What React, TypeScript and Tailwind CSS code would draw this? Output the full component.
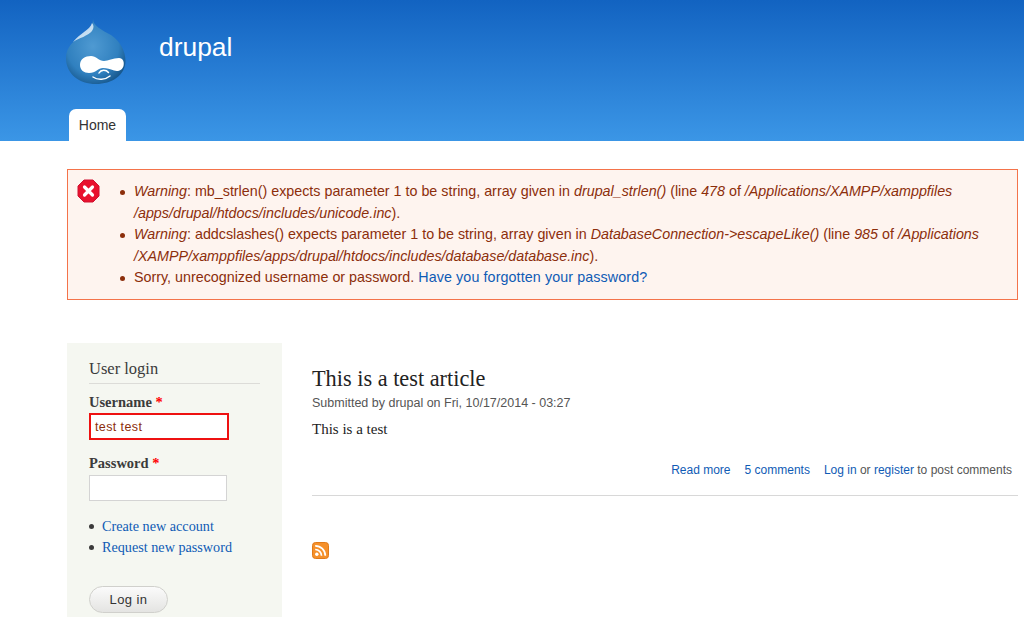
const sans = { fontFamily: '"Liberation Sans", Arial, sans-serif' };

function DrupalLogo() {
  return (
    <svg width="60" height="67" viewBox="6 6 60 67" className="block">
      <defs>
        <radialGradient id="drop" cx="0.45" cy="0.42" r="0.62">
          <stop offset="0" stopColor="#4f9ad2" />
          <stop offset="0.7" stopColor="#3080bf" />
          <stop offset="1" stopColor="#18598f" />
        </radialGradient>
      </defs>
      <path
        d="M33 7C33 14 42 18 51 23C60 29 65.500 39 65.500 49C65.500 63 52 72 36 72C19 72 6 62 6 46C6 35 14 28 23 23C28 20 33 15 33 7Z"
        fill="url(#drop)"
      />
      <path d="M32 11C30 18 20 21 13 30C19 26 28 24 32 19C34 16 34 13 32 11Z" fill="#d5e8f6" opacity="0.9" />
      <path
        d="M20 53C20 47 25 44 31 44C36 44 39 49 44 49C48 49 53 46 59 46C63 46 64.500 50 63.500 54C62.500 58 58 60 54 58.500C50 57 47 56 43 56C38 56 36 61 29 61C24 61 20 58 20 53Z"
        fill="#fff"
      />
      <path d="M39 61C41 57.500 46 57.500 48.500 60.500" stroke="#fff" strokeWidth="1.500" fill="none" strokeLinecap="round" />
      <path d="M33 65C38 68.500 45 68 50 64" stroke="#fff" strokeWidth="1.500" fill="none" strokeLinecap="round" />
    </svg>
  );
}

function ErrorIcon() {
  return (
    <svg width="23" height="24" viewBox="0 0 23 24" className="block">
      <path d="M7 1H16L22 7V17L16 23H7L1 17V7Z" fill="#e8112d" stroke="#d01030" strokeWidth="1" strokeLinejoin="round" />
      <path d="M7.500 8L15.500 16M15.500 8L7.500 16" stroke="#fff" strokeWidth="3.200" strokeLinecap="round" />
    </svg>
  );
}

function RssIcon() {
  return (
    <svg width="17" height="17" viewBox="0 0 17 17" className="block">
      <rect x="0.500" y="0.500" width="16" height="16" rx="3" fill="#f5902a" stroke="#e07a18" />
      <circle cx="4.800" cy="12.300" r="1.700" fill="#fff" />
      <path d="M3.200 7.500A6.200 6.200 0 0 1 9.500 13.800" stroke="#fff" strokeWidth="1.700" fill="none" />
      <path d="M3.200 3.800A10 10 0 0 1 13.300 13.800" stroke="#fff" strokeWidth="1.700" fill="none" />
    </svg>
  );
}

function Bullet({ children }: { children: React.ReactNode }) {
  return (
    <li className="flex">
      <span className="w-[14px] shrink-0 flex pt-[9px]">
        <span className="w-[5px] h-[5px] rounded-full bg-[#8c2e0b]" />
      </span>
      <span>{children}</span>
    </li>
  );
}

export default function App() {
  return (
    <div className="h-[617px] w-[1024px] overflow-hidden bg-white font-['Liberation_Serif',serif]">
      {/* Header */}
      <header className="h-[141px] bg-gradient-to-b from-[#1263c1] to-[#3b96e6] pl-[66px] flex flex-col" style={sans}>
        <div className="flex pt-[18px] h-[109px]">
          <DrupalLogo />
          <span className="ml-[33px] mt-[13px] text-[26.400px] leading-[32px] text-white">drupal</span>
        </div>
        <nav className="ml-[3px] w-[57px] h-[32px] bg-white rounded-t-[7px] flex items-center justify-center text-[14px] text-[#333]">
          Home
        </nav>
      </header>

      {/* Error messages */}
      <div className="ml-[67px] mt-[28px] w-[951px] h-[131px] border border-[#f4734a] bg-[#fef4ef] flex pl-[9px] pt-[9px] text-[#8c2e0b] text-[14.300px] leading-[21.500px]" style={sans}>
        <ErrorIcon />
        <ul className="ml-[20px] mt-[2px]">
          <Bullet>
            <em>Warning</em>: mb_strlen() expects parameter 1 to be string, array given in <em>drupal_strlen()</em> (line <em>478</em> of <em>/Applications/XAMPP/xamppfiles</em>
            <br />
            <em>/apps/drupal/htdocs/includes/unicode.inc</em>).
          </Bullet>
          <Bullet>
            <em>Warning</em>: addcslashes() expects parameter 1 to be string, array given in <em>DatabaseConnection-&gt;escapeLike()</em> (line <em>985</em> of <em>/Applications</em>
            <br />
            <em>/XAMPP/xamppfiles/apps/drupal/htdocs/includes/database/database.inc</em>).
          </Bullet>
          <Bullet>
            Sorry, unrecognized username or password. <a className="text-[#0f5bb5] tracking-[0.1px]">Have you forgotten your password?</a>
          </Bullet>
        </ul>
      </div>

      <div className="flex ml-[67px] mt-[43px]">
        {/* Sidebar */}
        <aside className="w-[215px] h-[274px] bg-[#f5f7f1] pl-[22px] pt-[16px] text-[#3b3b3b]">
          <h2 className="w-[171px] h-[25px] border-b border-[#dcdcd8] text-[16.500px] leading-[20px]">User login</h2>
          <label className="block mt-[10px] font-bold text-[14.500px] leading-[17px]">
            Username <span className="text-[#f00]">*</span>
          </label>
          <div className="mt-[2px] w-[140px] h-[27px] border-2 border-[#ee1111] bg-white pl-[4px] text-[12.500px] leading-[24px] text-[#8c2e0b] tracking-[0.4px]" style={sans}>
            test test
          </div>
          <label className="block mt-[15px] font-bold text-[14.500px] leading-[17px]">
            Password <span className="text-[#f00]">*</span>
          </label>
          <div className="mt-[3px] w-[138px] h-[26px] border border-[#d4d4d4] bg-white" />
          <ul className="mt-[15px] text-[14.200px] leading-[21px]">
            {["Create new account", "Request new password"].map((t) => (
              <li key={t} className="flex items-center">
                <span className="w-[5px] h-[5px] rounded-full bg-[#3b3b3b] mr-[8px]" />
                <a className="text-[#0f5bb5]">{t}</a>
              </li>
            ))}
          </ul>
          <button className="block mt-[28px] w-[79px] h-[27px] rounded-full border border-[#d0d0cc] bg-gradient-to-b from-[#fbfbfb] to-[#e4e4e2] text-[13px] text-[#333] tracking-[0.4px]" style={sans}>
            Log in
          </button>
        </aside>

        {/* Article */}
        <main className="ml-[30px] w-[706px] text-[#222]">
          <h1 className="mt-[22px] text-[22.300px] leading-[28px]">This is a test article</h1>
          <p className="mt-[2px] text-[12.500px] leading-[16px] text-[#555]" style={sans}>
            Submitted by drupal on Fri, 10/17/2014 - 03:27
          </p>
          <p className="mt-[9px] text-[15px] leading-[18px]">This is a test</p>
          <div className="mt-[24px] h-[34px] pr-[6px] flex justify-end gap-[14px] text-[12px] leading-[16px] text-[#555] border-b border-[#d8d8d8]" style={sans}>
            <a className="text-[#0f5bb5]">Read more</a>
            <a className="text-[#0f5bb5]">5 comments</a>
            <span>
              <a className="text-[#0f5bb5]">Log in</a> or <a className="text-[#0f5bb5]">register</a> to post comments
            </span>
          </div>
          <div className="mt-[46px]">
            <RssIcon />
          </div>
        </main>
      </div>
    </div>
  );
}
